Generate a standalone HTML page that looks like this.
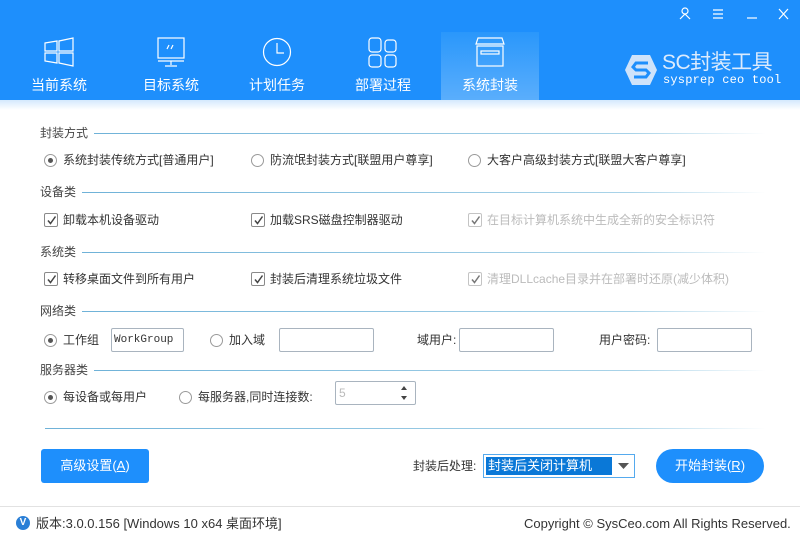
<!DOCTYPE html>
<html><head><meta charset="utf-8"><style>
*{margin:0;padding:0;box-sizing:border-box}
body{width:800px;height:540px;overflow:hidden;background:#fff;font-family:"Liberation Sans","Noto Sans CJK SC",sans-serif;font-size:12px;color:#333;position:relative}
.a{position:absolute}
.hdr{left:0;top:0;width:800px;height:100px;background:#1e8ffc}
.strip{left:0;top:100px;width:800px;height:10px;background:linear-gradient(#d4e9fd,#fff)}
.tab{top:32px;width:98px;height:68px;color:#fff;font-size:14px;text-align:center}
.tab .lbl{position:absolute;left:0;right:0;top:43px}
.tab svg{position:absolute;left:34px;top:5px}
.act{background:linear-gradient(#2a97fb,#5aaefc)}
.sec{left:40px;font-size:12px;color:#444;height:16px;line-height:16px}
.ln{height:1px;background:linear-gradient(90deg,#6fb2d8,#a9d3e8 80%,#fff)}
.rb{width:13px;height:13px;border:1px solid #9a9a9a;border-radius:50%;background:#fff}
.rb.on::after{content:"";position:absolute;left:3px;top:3px;width:5px;height:5px;border-radius:50%;background:#555}
.cb{width:14px;height:14px;border:1px solid #8a8a8a;background:#fff;border-radius:2px}
.cb svg{position:absolute;left:1px;top:1px}
.t{height:16px;line-height:16px;color:#333;white-space:nowrap}
.dis{color:#bbb}
.dis2{border-color:#c4c4c4}
.inp{height:24px;border:1px solid #a9b4bf;background:#fff;border-radius:2px}
</style></head><body>
<div class="a hdr"></div>
<div class="a strip"></div>
<svg class="a" style="left:676px;top:6px" width="115" height="16" fill="none" stroke="#fff" stroke-width="1.2">
<circle cx="9" cy="5" r="3"/><path d="M4 13 L9 8 L14 13"/>
<path d="M37 4h10M37 8h10M37 12h10"/>
<path d="M71 12h10"/>
<path d="M103 3l9 10M112 3l-9 10"/>
</svg>
<div class="a tab" style="left:10px"><svg width="30" height="30" fill="none" stroke="#fff" stroke-width="1.2"><path d="M1 6 L13 4 V14 H1Z M15 4 L29 1 V14 H15Z M1 16 H13 V26 L1 24Z M15 16 H29 V29 L15 26Z"/></svg><div class="lbl">当前系统</div></div>
<div class="a tab" style="left:122px"><svg width="30" height="32" fill="none" stroke="#fff" stroke-width="1.2"><rect x="2" y="1" width="26" height="20"/><path d="M2 24 H28 M15 24 V28 M9 29 H21 M13 8 L11 12 M17 8 L15 12"/></svg><div class="lbl">目标系统</div></div>
<div class="a tab" style="left:228px"><svg width="32" height="32" fill="none" stroke="#fff" stroke-width="1.2"><circle cx="15" cy="15" r="13.5"/><path d="M15 6 V16 H22"/></svg><div class="lbl">计划任务</div></div>
<div class="a tab" style="left:334px"><svg width="30" height="32" fill="none" stroke="#fff" stroke-width="1.2"><rect x="1" y="1" width="12" height="14" rx="3"/><rect x="17" y="3" width="11" height="12" rx="3"/><rect x="1" y="18" width="12" height="12" rx="3"/><rect x="17" y="18" width="11" height="12" rx="3"/></svg><div class="lbl">部署过程</div></div>
<div class="a tab act" style="left:441px"><svg width="30" height="30" fill="none" stroke="#fff" stroke-width="1.2"><path d="M3 1 H27 L29 7 H1Z"/><rect x="2" y="9" width="26" height="20"/><rect x="6" y="14" width="18" height="3"/></svg><div class="lbl">系统封装</div></div>
<svg class="a" style="left:624px;top:53px" width="34" height="34"><path d="M8 2 H26 L33 17 L26 32 H8 L1 17Z" fill="#cfe3fa"/><path d="M24 10 H12 L9 14 L12 17 H22 L25 20 L22 24 H10" fill="none" stroke="#1e8ffc" stroke-width="3"/></svg>
<div class="a" style="left:662px;top:50px;color:#dcebfd;font-size:21px;line-height:26px;letter-spacing:-0.5px;white-space:nowrap">SC封装工具</div>
<div class="a" style="left:663px;top:74px;color:#fff;font-family:'Liberation Mono',monospace;font-size:12px;line-height:12px;letter-spacing:0.2px;white-space:nowrap">sysprep ceo tool</div>

<div class="a sec" style="top:125px">封装方式</div><div class="a ln" style="left:94px;top:133px;width:672px"></div>
<div class="a rb on" style="left:44px;top:154px"></div><div class="a t" style="left:63px;top:152px">系统封装传统方式[普通用户]</div>
<div class="a rb" style="left:251px;top:154px"></div><div class="a t" style="left:270px;top:152px">防流氓封装方式[联盟用户尊享]</div>
<div class="a rb" style="left:468px;top:154px"></div><div class="a t" style="left:487px;top:152px">大客户高级封装方式[联盟大客户尊享]</div>

<div class="a sec" style="top:184px">设备类</div><div class="a ln" style="left:82px;top:192px;width:684px"></div>
<div class="a cb" style="left:44px;top:213px"><svg width="11" height="11"><path d="M2 5.5 L4.5 8.5 L9.5 1.5" fill="none" stroke="#444" stroke-width="1.5"/></svg></div><div class="a t" style="left:63px;top:212px">卸载本机设备驱动</div>
<div class="a cb" style="left:251px;top:213px"><svg width="11" height="11"><path d="M2 5.5 L4.5 8.5 L9.5 1.5" fill="none" stroke="#444" stroke-width="1.5"/></svg></div><div class="a t" style="left:270px;top:212px">加载SRS磁盘控制器驱动</div>
<div class="a cb dis2" style="left:468px;top:213px"><svg width="11" height="11"><path d="M2 5.5 L4.5 8.5 L9.5 1.5" fill="none" stroke="#777" stroke-width="1.5"/></svg></div><div class="a t dis" style="left:487px;top:212px">在目标计算机系统中生成全新的安全标识符</div>

<div class="a sec" style="top:244px">系统类</div><div class="a ln" style="left:82px;top:252px;width:684px"></div>
<div class="a cb" style="left:44px;top:272px"><svg width="11" height="11"><path d="M2 5.5 L4.5 8.5 L9.5 1.5" fill="none" stroke="#444" stroke-width="1.5"/></svg></div><div class="a t" style="left:63px;top:271px">转移桌面文件到所有用户</div>
<div class="a cb" style="left:251px;top:272px"><svg width="11" height="11"><path d="M2 5.5 L4.5 8.5 L9.5 1.5" fill="none" stroke="#444" stroke-width="1.5"/></svg></div><div class="a t" style="left:270px;top:271px">封装后清理系统垃圾文件</div>
<div class="a cb dis2" style="left:468px;top:272px"><svg width="11" height="11"><path d="M2 5.5 L4.5 8.5 L9.5 1.5" fill="none" stroke="#777" stroke-width="1.5"/></svg></div><div class="a t dis" style="left:487px;top:271px">清理DLLcache目录并在部署时还原(减少体积)</div>

<div class="a sec" style="top:303px">网络类</div><div class="a ln" style="left:82px;top:311px;width:684px"></div>
<div class="a rb on" style="left:44px;top:334px"></div><div class="a t" style="left:63px;top:332px">工作组</div>
<div class="a inp" style="left:111px;top:328px;width:73px;font-family:'Liberation Mono',monospace;font-size:11px;line-height:22px;padding-left:2px">WorkGroup</div>
<div class="a rb" style="left:210px;top:334px"></div><div class="a t" style="left:229px;top:332px">加入域</div>
<div class="a inp" style="left:279px;top:328px;width:95px"></div>
<div class="a t" style="left:417px;top:332px">域用户:</div>
<div class="a inp" style="left:459px;top:328px;width:95px"></div>
<div class="a t" style="left:599px;top:332px">用户密码:</div>
<div class="a inp" style="left:657px;top:328px;width:95px"></div>

<div class="a sec" style="top:362px">服务器类</div><div class="a ln" style="left:94px;top:370px;width:672px"></div>
<div class="a rb on" style="left:44px;top:391px"></div><div class="a t" style="left:63px;top:389px">每设备或每用户</div>
<div class="a rb" style="left:179px;top:391px"></div><div class="a t" style="left:198px;top:389px">每服务器,同时连接数:</div>
<div class="a inp" style="left:335px;top:381px;width:81px;color:#bbb;padding-left:3px;line-height:22px">5</div>
<svg class="a" style="left:398px;top:384px" width="12" height="18" fill="#444"><path d="M3 6 L6 2 L9 6Z M3 12 L9 12 L6 16Z"/></svg>

<div class="a ln" style="left:45px;top:428px;width:721px"></div>

<div class="a" style="left:41px;top:449px;width:108px;height:34px;background:#1e8ffc;border-radius:3px;color:#fff;font-size:13px;text-align:center;line-height:34px">高级设置(<u>A</u>)</div>
<div class="a t" style="left:413px;top:458px;font-size:12px">封装后处理:</div>
<div class="a" style="left:483px;top:454px;width:152px;height:24px;border:1px solid #55aaee;background:#fff"><div class="a" style="left:2px;top:2px;width:126px;height:18px;background:#0a78d7;color:#fff;font-size:13px;line-height:18px;padding-left:2px">封装后关闭计算机</div><svg class="a" style="left:134px;top:8px" width="12" height="7"><path d="M0 0 H11 L5.5 6Z" fill="#555"/></svg></div>
<div class="a" style="left:656px;top:449px;width:108px;height:34px;background:#1e8ffc;border-radius:17px;color:#fff;font-size:13px;text-align:center;line-height:34px">开始封装(<u>R</u>)</div>

<div class="a" style="left:0;top:506px;width:800px;height:1px;background:#e2e2e2"></div>
<div class="a" style="left:16px;top:516px;width:14px;height:14px;border-radius:50%;background:#2a7fd6;color:#fff;font-size:10px;font-weight:bold;text-align:center;line-height:14px">V</div>
<div class="a t" style="left:36px;top:516px;font-size:13px">版本:3.0.0.156 [Windows 10 x64 桌面环境]</div>
<div class="a t" style="left:524px;top:516px;font-size:13px">Copyright © SysCeo.com All Rights Reserved.</div>
</body></html>
